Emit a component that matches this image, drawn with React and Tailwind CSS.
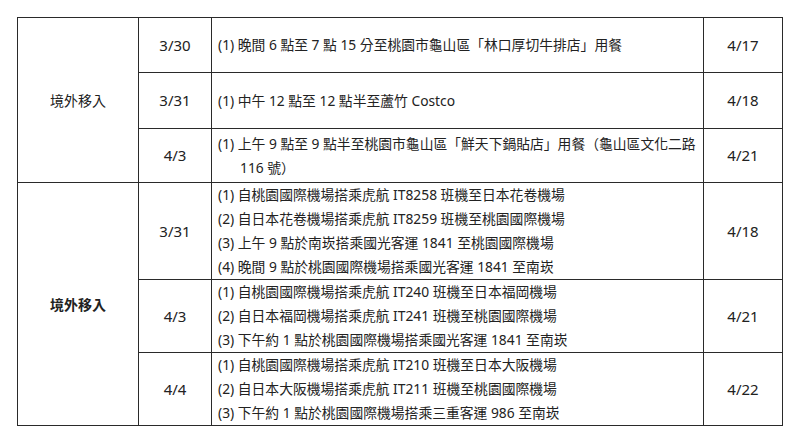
import React from 'react';

const groups = [
  {
    label: '境外移入',
    bold: false,
    rows: [
      { date: '3/30', h: 'h-[55px]', lines: ['(1) 晚間 6 點至 7 點 15 分至桃園市龜山區「林口厚切牛排店」用餐'], back: '4/17' },
      { date: '3/31', h: 'h-[56px]', lines: ['(1) 中午 12 點至 12 點半至蘆竹 Costco'], back: '4/18' },
      { date: '4/3', h: 'h-[54px]', lines: ['(1) 上午 9 點至 9 點半至桃園市龜山區「鮮天下鍋貼店」用餐（龜山區文化二路', '116 號）'], indent: true, back: '4/21' },
    ],
  },
  {
    label: '境外移入',
    bold: true,
    rows: [
      {
        date: '3/31',
        h: 'h-[97px]',
        lines: [
          '(1) 自桃園國際機場搭乘虎航 IT8258 班機至日本花卷機場',
          '(2) 自日本花卷機場搭乘虎航 IT8259 班機至桃園國際機場',
          '(3) 上午 9 點於南崁搭乘國光客運 1841 至桃園國際機場',
          '(4) 晚間 9 點於桃園國際機場搭乘國光客運 1841 至南崁',
        ],
        back: '4/18',
      },
      {
        date: '4/3',
        h: 'h-[72px]',
        lines: [
          '(1) 自桃園國際機場搭乘虎航 IT240 班機至日本福岡機場',
          '(2) 自日本福岡機場搭乘虎航 IT241 班機至桃園國際機場',
          '(3) 下午約 1 點於桃園國際機場搭乘國光客運 1841 至南崁',
        ],
        back: '4/21',
      },
      {
        date: '4/4',
        h: 'h-[73px]',
        lines: [
          '(1) 自桃園國際機場搭乘虎航 IT210 班機至日本大阪機場',
          '(2) 自日本大阪機場搭乘虎航 IT211 班機至桃園國際機場',
          '(3) 下午約 1 點於桃園國際機場搭乘三重客運 986 至南崁',
        ],
        back: '4/22',
      },
    ],
  },
];

export default function App() {
  return (
    <div className="w-[800px] h-[445px] bg-white pl-[17px] pt-[17px] text-[14px] text-[#222]" style={{ fontFamily: '"Noto Sans", "Noto Sans CJK TC", sans-serif' }}>
      <table className="table-fixed border-collapse border-[1.5px] border-[#2a2a2a] w-[765px]">
        <colgroup>
          <col className="w-[121px]" />
          <col className="w-[73px]" />
          <col className="w-[492px]" />
          <col className="w-[79px]" />
        </colgroup>
        <tbody>
          {groups.map((g, gi) =>
            g.rows.map((r, ri) => (
              <tr key={`${gi}-${ri}`} className={r.h}>
                {ri === 0 && (
                  <td rowSpan={g.rows.length} className={`border border-[#2a2a2a] text-center align-middle ${g.bold ? 'font-bold' : ''}`}>
                    {g.label}
                  </td>
                )}
                <td className="border border-[#2a2a2a] text-center align-middle text-[15px]">{r.date}</td>
                <td className="border border-[#2a2a2a] pl-[6px] pr-1 align-middle leading-[24px] text-[13.8px]">
                  {r.lines.map((l, li) => (
                    <div key={li} className={`whitespace-nowrap ${r.indent && li > 0 ? 'pl-[22px]' : ''}`}>{l}</div>
                  ))}
                </td>
                <td className="border border-[#2a2a2a] text-center align-middle text-[15px]">{r.back}</td>
              </tr>
            ))
          )}
        </tbody>
      </table>
    </div>
  );
}
